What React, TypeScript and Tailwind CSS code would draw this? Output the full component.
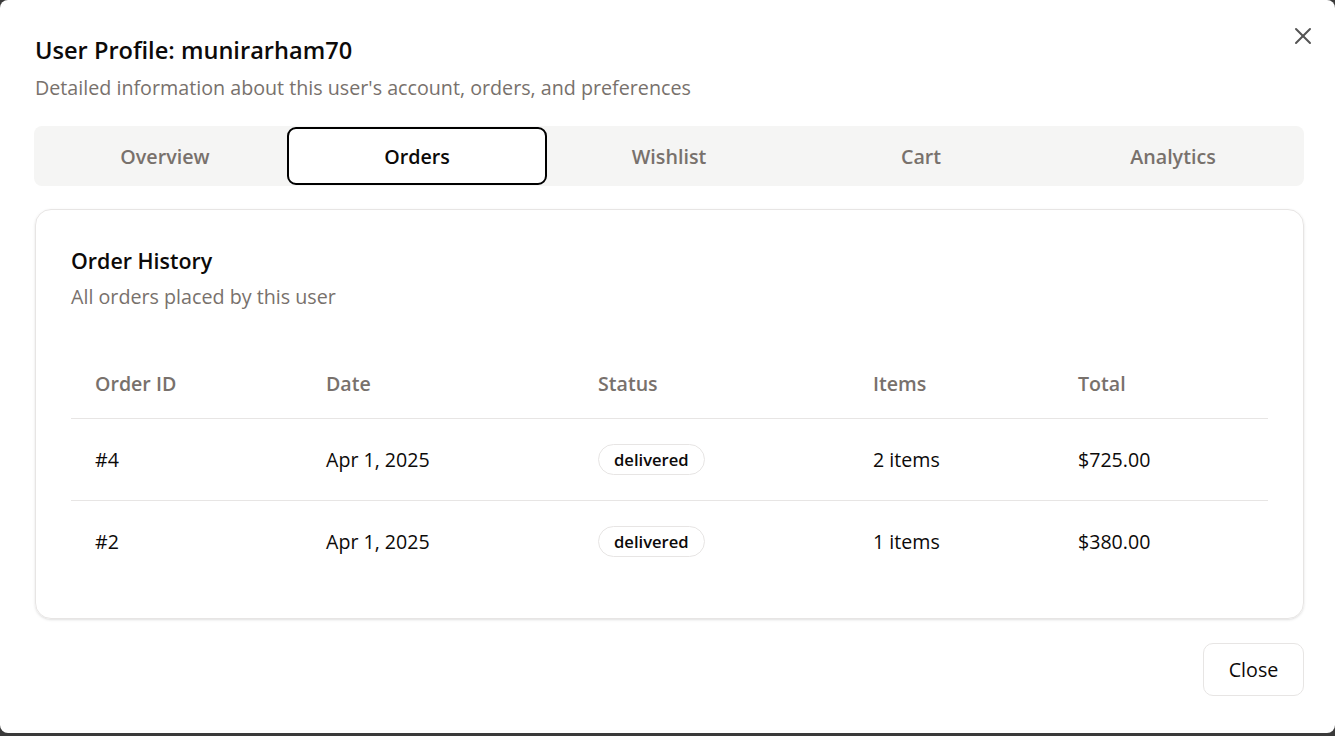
import { X } from "lucide-react";

const tabs = ["Overview", "Orders", "Wishlist", "Cart", "Analytics"];

const orders = [
  { id: "#4", date: "Apr 1, 2025", status: "delivered", items: 2, total: "$725.00" },
  { id: "#2", date: "Apr 1, 2025", status: "delivered", items: 1, total: "$380.00" },
];

const cols = "grid grid-cols-[231px_272px_275px_205px_1fr]";

export default function App() {
  return (
    <div className="h-screen w-full bg-[#3a3a3a] font-['Open_Sans',sans-serif] text-[#0c0a09]">
      <div className="relative flex h-[733px] w-full flex-col rounded-lg bg-white pl-[35px] pr-[31px] pt-[34px]">
        <button className="absolute right-[18px] top-[22px] text-[#555]">
          <X size={28} strokeWidth={1.7} />
        </button>

        <h2 className="text-[23.6px] font-semibold leading-8">
          User Profile: munirarham70
        </h2>
        <p className="mt-[8px] text-[19.7px] leading-7 text-[#78716c]">
          Detailed information about this user's account, orders, and preferences
        </p>

        <div className="-ml-px mt-6 grid h-[60px] grid-cols-5 rounded-lg bg-[#f5f5f4] p-[5px]">
          {tabs.map((tab) =>
            tab === "Orders" ? (
              <div
                key={tab}
                className="-m-[4px] flex items-center justify-center rounded-[9px] border-2 border-black bg-white pt-[2px] text-[19.7px] font-semibold"
              >
                {tab}
              </div>
            ) : (
              <div
                key={tab}
                className="flex items-center justify-center pt-[2px] text-[19.7px] font-semibold text-[#78716c]"
              >
                {tab}
              </div>
            )
          )}
        </div>

        <div className="mt-[23px] rounded-2xl border border-[#e7e5e4] px-[35px] pb-[36px] pt-[36px] shadow-sm">
          <h3 className="text-[21.4px] font-semibold leading-[30px]">Order History</h3>
          <p className="mt-[7px] text-[19.7px] leading-7 text-[#78716c]">
            All orders placed by this user
          </p>

          <div className="mt-[39px]">
            <div className={`${cols} h-[68px] items-center text-[19.6px] font-semibold text-[#78716c]`}>
              <div className="px-6">Order ID</div>
              <div className="px-6">Date</div>
              <div className="px-6">Status</div>
              <div className="px-6">Items</div>
              <div className="px-6">Total</div>
            </div>
            {orders.map((o) => (
              <div
                key={o.id}
                className={`${cols} h-[82px] items-center border-t border-[#e7e5e4] text-[19.6px]`}
              >
                <div className="px-6">{o.id}</div>
                <div className="px-6">{o.date}</div>
                <div className="px-6">
                  <span className="inline-flex h-[31px] items-center rounded-full border border-[#e7e5e4] px-[15px] text-[16.6px] font-semibold">
                    {o.status}
                  </span>
                </div>
                <div className="px-6">{o.items} items</div>
                <div className="px-6">{o.total}</div>
              </div>
            ))}
          </div>
        </div>

        <div className="mt-[24px] flex justify-end">
          <button className="h-[53px] w-[101px] rounded-[10px] border border-[#e7e5e4] text-[19.7px] font-medium">
            Close
          </button>
        </div>
      </div>
    </div>
  );
}
